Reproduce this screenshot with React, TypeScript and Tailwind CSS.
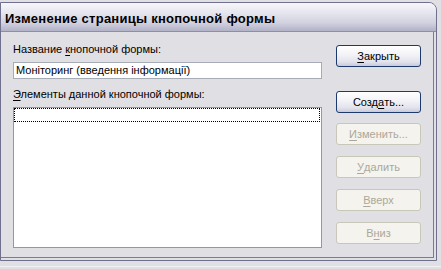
import React from "react";

const font = { fontFamily: '"Liberation Sans", Arial, sans-serif' };

function Btn({ children, disabled }: { children: React.ReactNode; disabled?: boolean }) {
  if (disabled) {
    return (
      <div className="w-[85px] h-[22px] rounded-[3px] border border-[#c9c7ba] bg-[#f4f3ee] text-[#aca899] text-[11px] leading-[13px] flex items-center justify-center">
        {children}
      </div>
    );
  }
  return (
    <div className="w-[85px] h-[22px] rounded-[3px] border border-[#1c3a6e] bg-[linear-gradient(to_bottom,#ffffff_0%,#f4f4f8_40%,#e2e2ec_80%,#c9c9da_100%)] text-black text-[11px] leading-[13px] flex items-center justify-center">
      {children}
    </div>
  );
}

export default function App() {
  return (
    <div className="w-[441px] h-[269px] bg-[#e0dfe3] overflow-hidden" style={font}>
      <div className="h-[2px]" />
      <div className="w-[437px] h-[259px] border border-[#6f6f8e] rounded-tr-[8px] overflow-hidden flex flex-col">
        <div className="h-[29px] shrink-0 border-b border-[#8e8eaa] bg-[linear-gradient(to_bottom,#f6f6fa_0%,#e6e6ef_35%,#d2d2e0_70%,#b2b2c8_100%)] pl-[4px] pt-[8px]">
          <div className="text-[13px] leading-[16px] font-bold tracking-[0.25px] text-black">Изменение страницы кнопочной формы</div>
        </div>
        <div className="flex-1 flex flex-col">
          <div className="w-[433px] h-[226px] border-r border-b border-[#7b7b98] flex pl-[12px] pt-[11px]">
            <div className="w-[309px] flex flex-col">
              <div className="h-[13px] text-[11px] leading-[13px] text-black">
                Название <span className="underline underline-offset-2">к</span>нопочной формы:
              </div>
              <div className="mt-[6px] h-[17px] border border-[#a5acb5] bg-white pl-[2px] text-[11px] leading-[14px] text-black">
                Моніторинг (введення інформації)
              </div>
              <div className="mt-[9px] h-[13px] text-[11px] leading-[13px] text-black">
                <span className="underline underline-offset-2">Э</span>лементы данной кнопочной формы:
              </div>
              <div className="mt-[6px] h-[141px] border border-[#7f9db9] bg-white p-0">
                <div className="h-[14px] border border-dotted border-black mr-[1px]" />
              </div>
            </div>
            <div className="ml-[14px] flex flex-col">
              <div className="mt-[2px]">
                <Btn><span className="underline underline-offset-2">З</span>акрыть</Btn>
              </div>
              <div className="mt-[24px]">
                <Btn>Созд<span className="underline underline-offset-2">а</span>ть...</Btn>
              </div>
              <div className="mt-[10px]">
                <Btn disabled><span className="underline underline-offset-2">И</span>зменить...</Btn>
              </div>
              <div className="mt-[11px]">
                <Btn disabled><span className="underline underline-offset-2">У</span>далить</Btn>
              </div>
              <div className="mt-[11px]">
                <Btn disabled><span className="underline underline-offset-2">В</span>верх</Btn>
              </div>
              <div className="mt-[11px]">
                <Btn disabled>В<span className="underline underline-offset-2">н</span>из</Btn>
              </div>
            </div>
          </div>
        </div>
      </div>
      <div className="h-[5px]" />
      <div className="h-[1px] bg-[#f2f2f4]" />
    </div>
  );
}
